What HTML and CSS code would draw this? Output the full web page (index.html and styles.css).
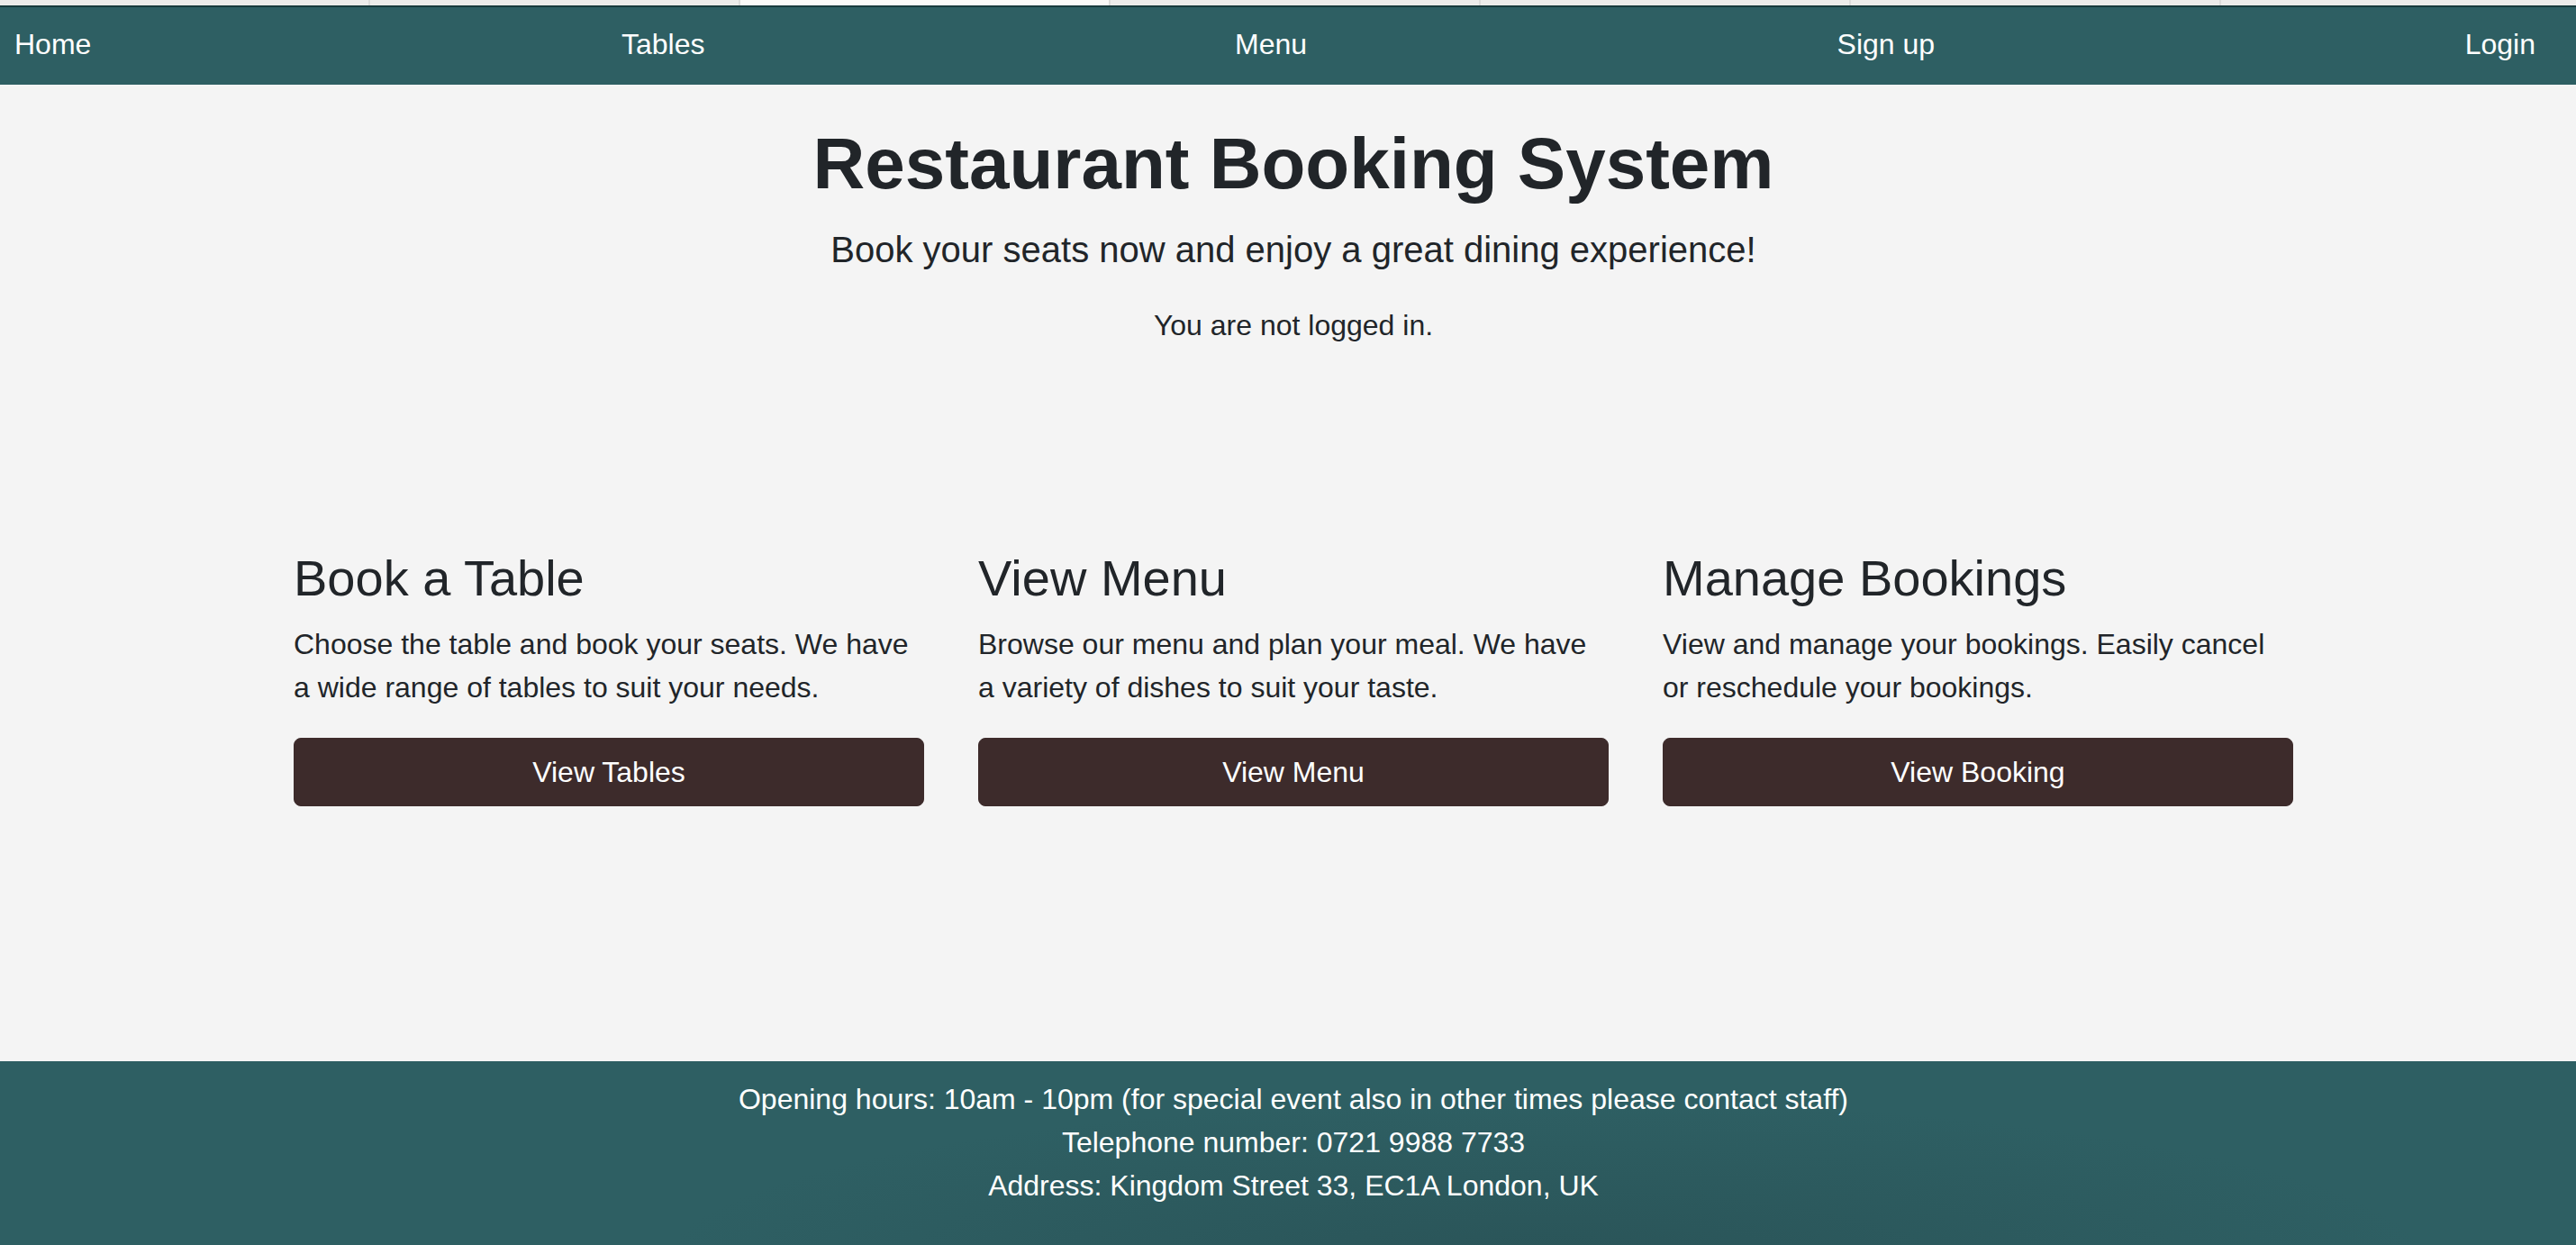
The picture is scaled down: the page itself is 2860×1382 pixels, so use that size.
FILE: index.html
```html
<!DOCTYPE html>
<html lang="en">
<head>
<meta charset="utf-8">
<title>Restaurant Booking System</title>
<link rel="stylesheet" href="styles.css">
</head>
<body>
<div class="page">
  <div class="tabstrip">
    <span class="tab"></span><span class="tab"></span><span class="tab tab-active"></span><span class="tab"></span><span class="tab"></span><span class="tab"></span><span class="tab"></span>
  </div>
  <nav class="navbar">
    <a class="nav-link" href="#">Home</a>
    <a class="nav-link" href="#">Tables</a>
    <a class="nav-link" href="#">Menu</a>
    <a class="nav-link" href="#">Sign up</a>
    <a class="nav-link" href="#">Login</a>
  </nav>
  <main class="main">
    <section class="hero">
      <h1 class="hero-title">Restaurant Booking System</h1>
      <p class="lead">Book your seats now and enjoy a great dining experience!</p>
      <p class="status">You are not logged in.</p>
    </section>
    <section class="cards">
      <div class="card">
        <h3 class="card-title">Book a Table</h3>
        <p class="card-text">Choose the table and book your seats. We have a wide range of tables to suit your needs.</p>
        <a class="btn" href="#">View Tables</a>
      </div>
      <div class="card">
        <h3 class="card-title">View Menu</h3>
        <p class="card-text">Browse our menu and plan your meal. We have a variety of dishes to suit your taste.</p>
        <a class="btn" href="#">View Menu</a>
      </div>
      <div class="card">
        <h3 class="card-title">Manage Bookings</h3>
        <p class="card-text">View and manage your bookings. Easily cancel or reschedule your bookings.</p>
        <a class="btn" href="#">View Booking</a>
      </div>
    </section>
  </main>
  <footer class="footer">
    <p class="footer-line">Opening hours: 10am - 10pm (for special event also in other times please contact staff)</p>
    <p class="footer-line">Telephone number: 0721 9988 7733</p>
    <p class="footer-line">Address: Kingdom Street 33, EC1A London, UK</p>
  </footer>
</div>
</body>
</html>
```

FILE: styles.css
```css
* {
  box-sizing: border-box;
}

html, body {
  margin: 0;
  padding: 0;
  height: 100%;
}

body {
  font-family: "Liberation Sans", Arial, Helvetica, sans-serif;
  font-size: 32px;
  line-height: 1.5;
  color: #212529;
  background: #f4f4f4;
  overflow: hidden;
}

.page {
  display: flex;
  flex-direction: column;
  min-height: 1382px;
}

.tabstrip {
  display: flex;
  height: 6px;
  background: #ececea;
}

.tab {
  flex: 0 0 411px;
  border-right: 2px solid #dcdcda;
}

.tab-active {
  background: #fafaf8;
}

.navbar {
  display: flex;
  justify-content: space-between;
  align-items: center;
  height: 88px;
  padding: 0 45px 4px 16px;
  background: #2e5f63;
  border-top: 2px solid #183b3d;
}

.nav-link {
  color: #ffffff;
  text-decoration: none;
  font-size: 32px;
  line-height: 48px;
}

.main {
  flex: 1;
  padding-left: 12px;
}

.hero {
  text-align: center;
  padding-top: 40px;
}

.hero-title {
  margin: 0 0 17px;
  font-size: 80px;
  line-height: 1.2;
  font-weight: 700;
}

.lead {
  margin: 0 0 30px;
  font-size: 40px;
  line-height: 1.5;
  font-weight: 400;
}

.status {
  margin: 0;
  font-size: 32px;
  line-height: 48px;
}

.cards {
  display: grid;
  grid-template-columns: repeat(3, 700px);
  column-gap: 60px;
  justify-content: center;
  margin-top: 223px;
}

.card {
  display: flex;
  flex-direction: column;
}

.card-title {
  margin: 0 0 16px;
  font-size: 56px;
  line-height: 1.2;
  font-weight: 400;
}

.card-text {
  margin: 0 0 32px;
  font-size: 32px;
  line-height: 48px;
}

.btn {
  display: block;
  height: 76px;
  line-height: 74px;
  text-align: center;
  color: #ffffff;
  background: #3d2b2b;
  border: 1px solid #3d2b2b;
  border-radius: 8px;
  text-decoration: none;
  font-size: 32px;
}

.footer {
  height: 204px;
  padding: 18px 0 0 12px;
  text-align: center;
  color: #ffffff;
  background: radial-gradient(ellipse 1400px 260px at 60% 110%, #2a5458 0%, rgba(46, 95, 99, 0) 70%), #2e5f63;
}

.footer-line {
  margin: 0;
  font-size: 32px;
  line-height: 48px;
}
```
